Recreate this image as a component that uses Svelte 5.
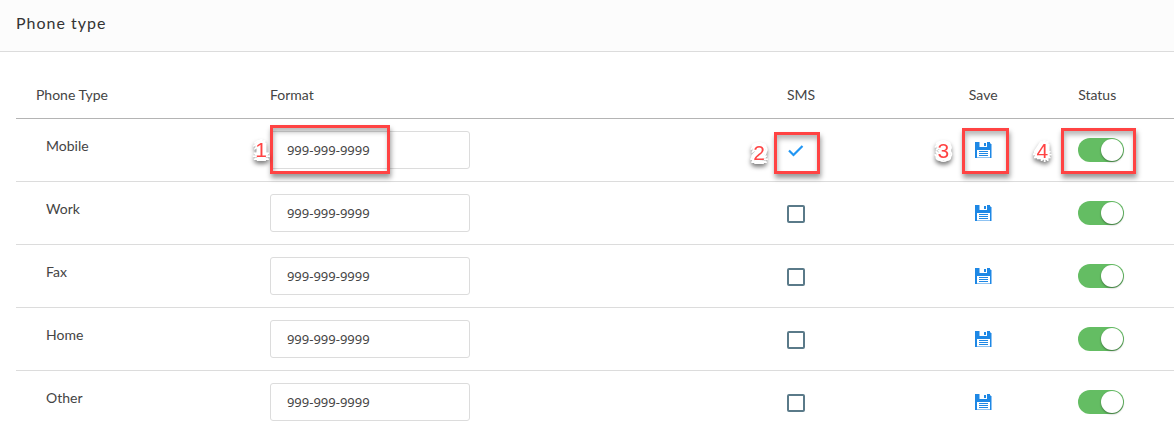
<script>
  let phoneTypes = [
    { name: 'Mobile', format: '999-999-9999', sms: true, active: true },
    { name: 'Work', format: '999-999-9999', sms: false, active: true },
    { name: 'Fax', format: '999-999-9999', sms: false, active: true },
    { name: 'Home', format: '999-999-9999', sms: false, active: true },
    { name: 'Other', format: '999-999-9999', sms: false, active: true }
  ];
</script>

<main>
  <header>
    <h1>Phone type</h1>
  </header>

  <div class="content">
    <table>
      <thead>
        <tr>
          <th class="col-name">Phone Type</th>
          <th class="col-format">Format</th>
          <th class="col-sms">SMS</th>
          <th class="col-save">Save</th>
          <th class="col-status">Status</th>
        </tr>
      </thead>
      <tbody>
        {#each phoneTypes as type, i}
          <tr>
            <td class="name">{type.name}</td>
            <td>
              <div class="cell">
                <input class="format" type="text" aria-label="{type.name} format" bind:value={type.format}>
                {#if i === 0}
                  <span class="callout callout-format"><b>1</b></span>
                {/if}
              </div>
            </td>
            <td>
              <div class="cell">
                <label class="check">
                  <input type="checkbox" aria-label="{type.name} SMS" bind:checked={type.sms}>
                  {#if type.sms}
                    <svg viewBox="0 0 18 18" width="18" height="18">
                      <path d="M2 8.500 L6.500 13 L15.500 4" fill="none" stroke="#2196f3" stroke-width="2.200"/>
                    </svg>
                  {/if}
                </label>
                {#if i === 0}
                  <span class="callout callout-sms"><b>2</b></span>
                {/if}
              </div>
            </td>
            <td class="save">
              <div class="cell">
                <button type="button" aria-label="Save {type.name}">
                  <svg viewBox="0 0 17 16" width="17" height="16">
                    <path d="M0 0H15V1.500H16V16H0Z" fill="#1e88e5"/>
                    <path d="M16 2H17V16H16Z" fill="#8fc3f2"/>
                    <path d="M4 0H12V5H4Z" fill="#fff"/>
                    <path d="M4 0H5V5H4Z" fill="#8fc3f2"/>
                    <path d="M9 1H11V4H9Z" fill="#1e88e5"/>
                    <path d="M2 8H15V16H2Z" fill="#fff"/>
                    <path d="M4 9.500H13M4 11.500H13M4 13.500H13" stroke="#1e88e5"/>
                    <path d="M2 15.500H15" stroke="#8fc3f2"/>
                  </svg>
                </button>
                {#if i === 0}
                  <span class="callout callout-save"><b>3</b></span>
                {/if}
              </div>
            </td>
            <td>
              <div class="cell">
                <input class="switch" type="checkbox" role="switch" aria-label="{type.name} status" bind:checked={type.active}>
                {#if i === 0}
                  <span class="callout callout-status"><b>4</b></span>
                {/if}
              </div>
            </td>
          </tr>
        {/each}
      </tbody>
    </table>
  </div>
</main>

<style>
  :global(body) {
    background: #fff;
  }

  main, input, button {
    font-family: Lato, 'Noto Sans', sans-serif;
    color: #444;
  }

  main {
    font-size: 14px;
  }

  header {
    padding: 11px 16px 16px;
    background: #fcfcfc;
    border-bottom: 1px solid #dcdcdc;
  }

  h1 {
    margin: 0;
    font-size: 16px;
    font-weight: 400;
    line-height: 24px;
    letter-spacing: 1px;
    color: #333;
  }

  .content {
    padding: 20px 0 9px 16px;
  }

  table {
    width: 100%;
    table-layout: fixed;
    border-collapse: separate;
    border-spacing: 0;
  }

  .col-name { width: 20.2%; }
  .col-format { width: 44.65%; }
  .col-sms { width: 12.2%; }
  .col-save { width: 12.95%; }

  th {
    box-sizing: border-box;
    padding: 13px 20px;
    font-weight: 400;
    line-height: 20px;
    text-align: left;
    border-bottom: 1px solid #b4b4b4;
  }

  th.col-save, .save {
    text-align: center;
  }

  td {
    padding: 12px 20px;
    border-bottom: 1px solid #dcdcdc;
  }

  tr:last-child td {
    border-bottom: 0;
  }

  .name {
    padding: 17px 30px;
    line-height: 20px;
    vertical-align: top;
  }

  .cell {
    position: relative;
    display: flex;
    align-items: center;
    height: 38px;
  }

  .save .cell {
    justify-content: center;
  }

  .format {
    box-sizing: border-box;
    width: 200px;
    height: 38px;
    padding: 0 16px;
    font-family: 'Noto Sans', sans-serif;
    font-size: 13px;
    background: #fff;
    border: 1px solid #dcdcdc;
    border-radius: 3px;
    outline: none;
  }

  .check {
    position: relative;
    display: block;
    height: 18px;
    margin-top: 2px;
  }

  .check input {
    appearance: none;
    box-sizing: border-box;
    display: block;
    width: 18px;
    height: 18px;
    margin: 0;
    border: 2px solid #5a7a89;
    border-radius: 2px;
  }

  .check input:checked {
    border-color: transparent;
  }

  .check svg {
    position: absolute;
    top: 0;
    left: 0;
  }

  button {
    display: block;
    padding: 0;
    background: none;
    border: 0;
    cursor: pointer;
  }

  button svg {
    display: block;
  }

  .switch {
    appearance: none;
    width: 46px;
    height: 24px;
    margin: 0;
    padding: 1px;
    box-sizing: border-box;
    background: #ccc;
    border-radius: 12px;
    cursor: pointer;
  }

  .switch:checked {
    background: #64bd63;
  }

  .switch::before {
    content: '';
    display: block;
    width: 22px;
    height: 22px;
    background: #fff;
    border-radius: 50%;
    box-shadow: 0 1px 2px rgba(0, 0, 0, 0.4);
  }

  .switch:checked::before {
    margin-left: auto;
  }

  /* numbered help markers drawn over the first row */
  .callout {
    position: absolute;
    box-sizing: border-box;
    border: 3px solid #ff4343;
    box-shadow: 1px 4px 5px rgba(0, 0, 0, 0.4), inset 1px 4px 5px rgba(0, 0, 0, 0.28);
    pointer-events: none;
  }

  .callout b {
    position: absolute;
    top: 50%;
    right: 100%;
    margin-top: -12px;
    margin-right: 12px;
    font-family: 'Liberation Sans', sans-serif;
    font-size: 21px;
    font-weight: 400;
    line-height: 24px;
    color: #ff4343;
    text-shadow: 4px 0 #fff, -4px 0 #fff, 0 4px #fff, 0 -4px #fff,
      3px 3px #fff, -3px 3px #fff, 3px -3px #fff, -3px -3px #fff,
      2px 2px #fff, -2px 2px #fff, 2px -2px #fff, -2px -2px #fff,
      2px 0 #fff, -2px 0 #fff, 0 2px #fff, 0 -2px #fff;
    filter: drop-shadow(0 3px 2px rgba(0, 0, 0, 0.5));
  }

  .callout-format {
    top: -6px;
    left: 0;
    width: 120px;
    height: 49px;
  }

  .callout-sms {
    top: 1px;
    left: -13px;
    width: 46px;
    height: 42px;
  }

  .callout-save {
    top: -3px;
    left: calc(50% - 21px);
    width: 47px;
    height: 46px;
  }

  .callout-status {
    top: -3px;
    left: -17px;
    width: 75px;
    height: 46px;
  }

  .callout-format b {
    margin-right: 6px;
  }

  .callout-save b, .callout-status b {
    margin-right: 16px;
  }
</style>
